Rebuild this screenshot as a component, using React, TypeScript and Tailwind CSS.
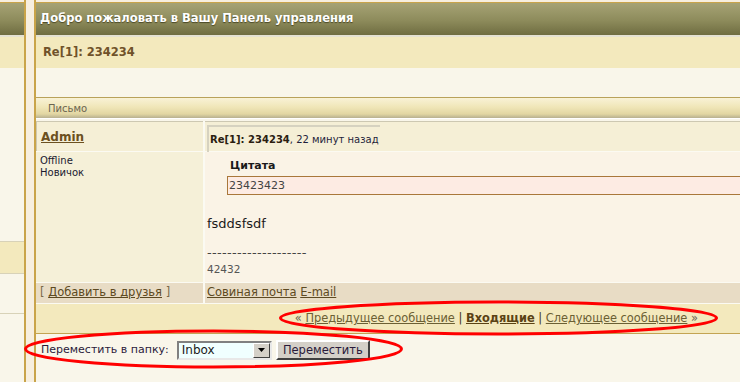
export default function App() {
  return (
    <div className="relative w-[740px] h-[382px] overflow-hidden flex bg-[#f7efdf] font-['DejaVu_Sans',sans-serif]">
      {/* cropped sidebar on the left */}
      <div className="w-[26px] shrink-0 flex flex-col border-r-2 border-[#c9a44a]">
        <div className="h-[2px]" />
        <div className="h-px bg-[#c9a44a]" />
        <div className="h-[32px] bg-[linear-gradient(to_bottom,#a6a375,#8d8b5b_55%,#6f6d41)]" />
        <div className="h-[2px] bg-[#e4e1d2]" />
        <div className="h-[31px] bg-[#f3e9bd]" />
        <div className="h-[174px] bg-[#f9f6ea] border-b border-[#d8d2b8]" />
        <div className="h-[32px] bg-[#f3e9bd] border-b border-[#d8d2b8]" />
        <div className="h-[40px] bg-[#f9f6ea] border-b border-[#d8d2b8]" />
        <div className="flex-1 bg-[#f9f6ea]" />
      </div>
      <div className="w-[8px] shrink-0" />

      {/* main panel */}
      <div className="flex-1 min-w-0 border-l-2 border-[#c9a44a] bg-[#f9f6ea] flex flex-col">
        <div className="h-[2px] bg-[#f7efdf]" />
        <div className="h-px bg-[#c9a44a]" />
        <div className="h-[32px] bg-[linear-gradient(to_bottom,#a6a375,#8d8b5b_55%,#6f6d41)] flex items-center pl-[4px] text-[11.5px] font-bold text-white [text-shadow:0_1px_1px_#4a4826]">
          Добро пожаловать в Вашу Панель управления
        </div>
        <div className="h-[2px] bg-[#e4e1d2]" />
        <div className="h-[31px] bg-[#f3e9bd] flex items-center pl-[7px] text-[11.5px] font-bold text-[#70522a]">
          Re[1]: 234234
        </div>
        <div className="h-[29px]" />
        <div className="h-px bg-[#b9a25a]" />
        <div className="h-[20px] bg-[linear-gradient(to_bottom,#f9f2d6,#f0e6b8_45%,#e2d6a2_80%,#b8b090)] flex items-center pl-[12px] text-[10px] text-[#6b6450]">
          Письмо
        </div>
        <div className="h-px bg-white" />
        <div className="h-[2px]" />

        {/* message table */}
        <div className="grid grid-cols-[167px_1fr] gap-x-[2px] gap-y-px bg-[#fbfaf2]">
          <div className="h-[30px] bg-[#f5efd6] border-t border-l border-[#cdc8b2] flex items-center pl-[4px]">
            <span className="text-[12px] font-bold text-[#6b5020] underline">Admin</span>
          </div>
          <div className="h-[30px] bg-[#f5efd6] border-t border-[#cdc8b2] pt-[3px] pl-[2px]">
            <span className="inline-block border-t-2 border-l-2 border-[#d6d2c0] px-[1px] pt-[5px] pb-[6px] text-[10px] text-[#1e1e3a]">
              <b className="text-[#2a2010]">Re[1]: 234234</b>, 22 минут назад
            </span>
          </div>

          <div className="h-[130px] bg-[#f5f0d8] pl-[4px] pt-[3px] text-[10px] leading-[12px] text-[#1a1a30]">
            <div>Offline</div>
            <div>Новичок</div>
          </div>
          <div className="h-[130px] bg-[#faf3e6] pl-[2px] pt-[7px]">
            <div className="pl-[23px] text-[11px] font-bold text-[#1a1a1a] leading-[14px]">Цитата</div>
            <div className="ml-[20px] -mr-[20px] mt-[3px] h-[19px] border border-[#a9773a] bg-[#fdebe3] pl-[1px] text-[11px] leading-[17px] text-[#444]">
              23423423
            </div>
            <div className="mt-[21px] text-[13px] leading-[16px] text-[#1a1a1a]">fsddsfsdf</div>
            <div className="mt-[14px] text-[13px] leading-[14px] text-[#444] tracking-[0.3px]">--------------------</div>
            <div className="mt-[2px] text-[10.5px] leading-[14px] text-[#555]">42432</div>
          </div>

          <div className="h-[20px] bg-[#e8dcc5] flex items-center pl-[4px] text-[11.5px] text-[#7a6a4a]">
            [&nbsp;<span className="underline text-[#5d4a22]">Добавить в друзья</span>&nbsp;]
          </div>
          <div className="h-[20px] bg-[#e8dcc5] flex items-center pl-[2px] text-[11.5px] text-[#5d4a22]">
            <span className="underline">Совиная почта</span>&nbsp;<span className="underline">E-mail</span>
          </div>

          <div className="col-span-2 h-[30px] bg-[#f3e9bd] border-b border-[#c3a453] flex items-center justify-end pr-[42px] text-[11.4px] text-[#3a3020]">
            <span className="text-[#6b6450]">«</span>&nbsp;
            <span className="underline text-[#6b6034]">Предыдущее сообщение</span>&nbsp;|&nbsp;
            <span className="underline font-bold text-[#5a4214]">Входящие</span>&nbsp;|&nbsp;
            <span className="underline text-[#6b6034]">Следующее сообщение</span>&nbsp;
            <span className="text-[#6b6450]">»</span>
          </div>
        </div>

        {/* move form */}
        <div className="flex items-center pt-[6px] pl-[5px] text-[11px] text-[#2a1a3a]">
          <span>Переместить в папку:</span>
          <div className="ml-[8px] w-[95px] h-[19px] flex border-2 border-t-[#808080] border-l-[#808080] border-r-[#e8e8e8] border-b-[#e8e8e8] bg-[#f0ffff]">
            <span className="flex-1 pl-[3px] text-[12px] leading-[15px] text-[#1a1a1a]">Inbox</span>
            <span className="w-[17px] bg-[#d4d0c8] border border-t-white border-l-white border-r-[#404040] border-b-[#404040] flex items-center justify-center">
              <svg width="7" height="4" viewBox="0 0 7 4"><path d="M0 0h7L3.5 4z" fill="#000" /></svg>
            </span>
          </div>
          <button className="ml-[4px] w-[94px] h-[20px] bg-[#d4d0c8] border-2 border-t-white border-l-white border-r-[#404040] border-b-[#404040] text-[11.5px] text-[#2a1a3a] font-['DejaVu_Sans',sans-serif]">
            Переместить
          </button>
        </div>
      </div>

      {/* red annotation marks */}
      <svg className="absolute inset-0 pointer-events-none" width="740" height="382">
        <ellipse cx="498.5" cy="318" rx="218" ry="16" fill="none" stroke="#ff0000" strokeWidth="3" />
        <ellipse cx="213.5" cy="349" rx="188" ry="18" fill="none" stroke="#ff0000" strokeWidth="3" />
      </svg>
    </div>
  );
}
